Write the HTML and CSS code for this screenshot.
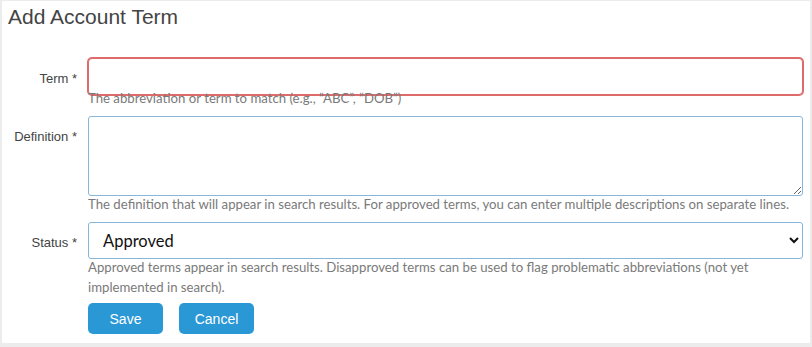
FILE: index.html
```html
<!DOCTYPE html>
<html lang="en">

<head>
    <meta charset="UTF-8">
    <meta name="viewport" content="width=device-width, initial-scale=1.0">
    <title>Add Account Term</title>
    <link rel="stylesheet" href="styles.css">
</head>

<body>
    <div class="panel">
        <h2 class="panel-title">Add Account Term</h2>

        <form class="term-form">
            <div class="field">
                <label class="field-label" for="term">Term *</label>
                <input type="text" id="term" class="field-input is-invalid">
                <div class="field-help help-tight">The abbreviation or term to match (e.g., “ABC”, “DOB”)</div>
            </div>

            <div class="field">
                <label class="field-label" for="definition">Definition *</label>
                <textarea id="definition" class="field-input field-textarea"></textarea>
                <div class="field-help">The definition that will appear in search results. For approved terms, you can enter multiple descriptions on separate lines.</div>
            </div>

            <div class="field">
                <label class="field-label" for="status">Status *</label>
                <select id="status" class="field-input field-select">
                    <option>Approved</option>
                    <option>Disapproved</option>
                </select>
                <div class="field-help">Approved terms appear in search results. Disapproved terms can be used to flag problematic abbreviations (not yet implemented in search).</div>
            </div>

            <div class="form-actions">
                <button type="button" class="btn">Save</button>
                <button type="button" class="btn">Cancel</button>
            </div>
        </form>
    </div>
</body>

</html>
```

FILE: styles.css
```css
* {
    margin: 0;
    padding: 0;
    box-sizing: border-box;
}

body {
    background-color: #ececec;
    font-family: "Liberation Sans", Arial, sans-serif;
    height: 347px;
    overflow: hidden;
}

.panel {
    margin: 1px 2px 0 2px;
    padding: 0 7px 9px 6px;
    background-color: #fff;
}

.panel-title {
    padding-top: 4px;
    margin-bottom: 30px;
    font-size: 21px;
    line-height: 23px;
    font-weight: normal;
    color: #444;
}

.field {
    display: grid;
    grid-template-columns: 69px 1fr;
    column-gap: 11px;
    margin-bottom: 8px;
}

.field-label {
    padding-top: 12px;
    font-size: 13px;
    line-height: 18px;
    color: #444;
    text-align: right;
}

.field-input {
    width: 100%;
    height: 37px;
    border: 1px solid #86b7da;
    border-radius: 3px;
    background-color: #fff;
    font-family: Lato, "Liberation Sans", sans-serif;
    outline: none;
}

/* invalid state draws a double red edge */
.field-input.is-invalid {
    border-color: #de6a6a;
    border-radius: 4px;
    box-shadow: 0 0 0 1px #de6a6a;
}

.field-textarea {
    height: 80px;
    resize: vertical;
    display: block;
}

.field-select {
    padding-left: 10px;
    font-size: 16.5px;
    color: #111;
}

.field-help {
    grid-column: 2;
    margin-top: -2px;
    font-family: Lato, "Liberation Sans", sans-serif;
    font-size: 13.2px;
    line-height: 20px;
    color: #7a7a7a;
}

.help-tight {
    margin-top: -7px;
}

.form-actions {
    display: flex;
    gap: 16px;
    margin-top: -2px;
    padding-left: 80px;
}

.btn {
    width: 75px;
    height: 31px;
    border: none;
    border-radius: 5px;
    background-color: #2b98d6;
    color: #fff;
    font-family: "Liberation Sans", Arial, sans-serif;
    font-size: 14px;
    cursor: pointer;
}
```
